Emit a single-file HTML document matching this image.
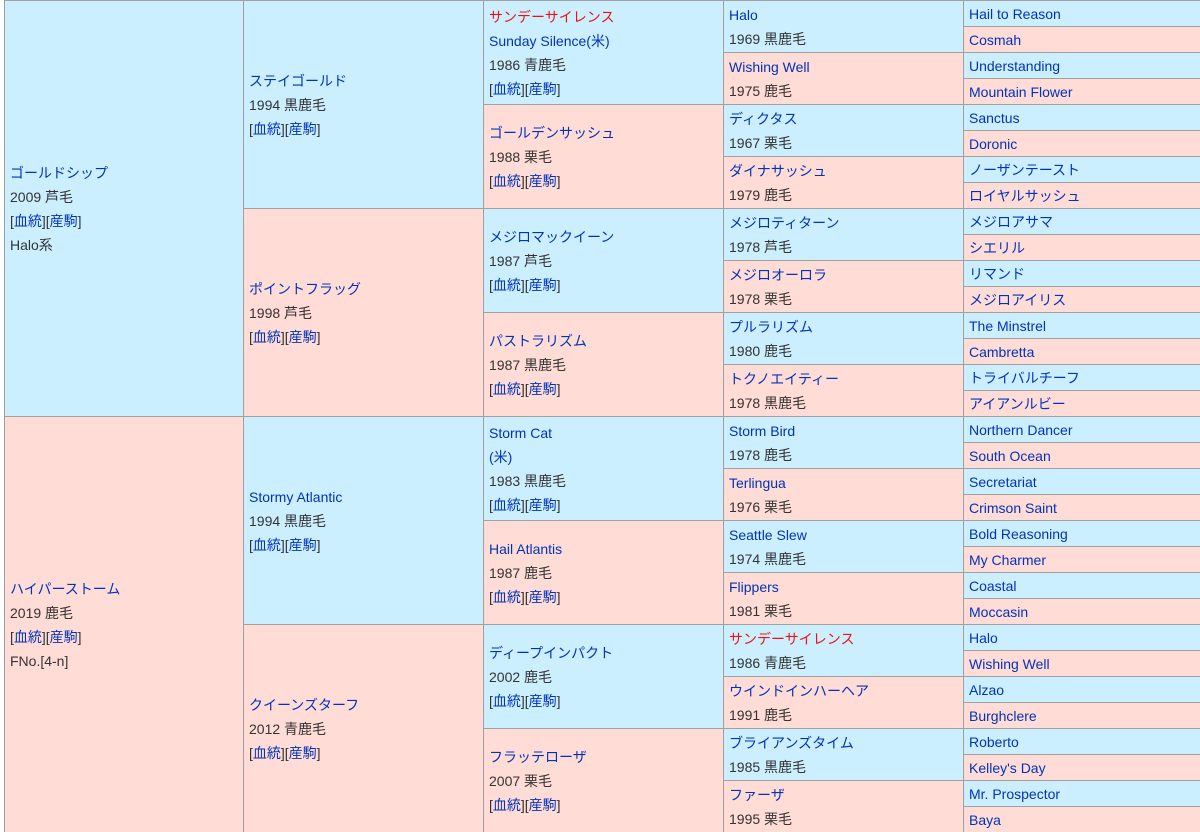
<!DOCTYPE html>
<html><head><meta charset="utf-8"><style>
body{margin:0;width:1200px;height:831px;overflow:hidden;background:#fff;font-family:"Liberation Sans","Noto Sans CJK JP",sans-serif;font-size:14px;color:#333}
.c{position:absolute;box-sizing:border-box;border-left:1px solid #a0a0a0;border-top:1px solid #a0a0a0;display:flex;flex-direction:column;justify-content:center;padding-left:5px;line-height:24px;white-space:nowrap;overflow:hidden}
.b{background:#ccefff}.p{background:#ffdcd6}
a,.l{color:#0033bb;text-decoration:none}
.r{color:#ee1111}
.g1{left:4px;width:240px;height:416px}
.g2{left:243px;width:241px;height:208px}
.g3{left:483px;width:241px;height:104px}
.g4{left:723px;width:241px;height:52px}
.g5{left:963px;width:237px;height:26px}
</style></head><body>
<div class="c g1 b" style="top:0"><span class="l">ゴールドシップ</span><span>2009 芦毛</span><span>[<a>血統</a>][<a>産駒</a>]</span><span>Halo系</span></div>
<div class="c g1 p" style="top:416px"><span class="l">ハイパーストーム</span><span>2019 鹿毛</span><span>[<a>血統</a>][<a>産駒</a>]</span><span>FNo.[4-n]</span></div>

<div class="c g2 b" style="top:0"><span class="l">ステイゴールド</span><span>1994 黒鹿毛</span><span>[<a>血統</a>][<a>産駒</a>]</span></div>
<div class="c g2 p" style="top:208px"><span class="l">ポイントフラッグ</span><span>1998 芦毛</span><span>[<a>血統</a>][<a>産駒</a>]</span></div>
<div class="c g2 b" style="top:416px"><span class="l">Stormy Atlantic</span><span>1994 黒鹿毛</span><span>[<a>血統</a>][<a>産駒</a>]</span></div>
<div class="c g2 p" style="top:624px"><span class="l">クイーンズターフ</span><span>2012 青鹿毛</span><span>[<a>血統</a>][<a>産駒</a>]</span></div>

<div class="c g3 b" style="top:0"><span class="r">サンデーサイレンス</span><span class="l">Sunday Silence(米)</span><span>1986 青鹿毛</span><span>[<a>血統</a>][<a>産駒</a>]</span></div>
<div class="c g3 p" style="top:104px"><span class="l">ゴールデンサッシュ</span><span>1988 栗毛</span><span>[<a>血統</a>][<a>産駒</a>]</span></div>
<div class="c g3 b" style="top:208px"><span class="l">メジロマックイーン</span><span>1987 芦毛</span><span>[<a>血統</a>][<a>産駒</a>]</span></div>
<div class="c g3 p" style="top:312px"><span class="l">パストラリズム</span><span>1987 黒鹿毛</span><span>[<a>血統</a>][<a>産駒</a>]</span></div>
<div class="c g3 b" style="top:416px"><span class="l">Storm Cat</span><span class="l">(米)</span><span>1983 黒鹿毛</span><span>[<a>血統</a>][<a>産駒</a>]</span></div>
<div class="c g3 p" style="top:520px"><span class="l">Hail Atlantis</span><span>1987 鹿毛</span><span>[<a>血統</a>][<a>産駒</a>]</span></div>
<div class="c g3 b" style="top:624px"><span class="l">ディープインパクト</span><span>2002 鹿毛</span><span>[<a>血統</a>][<a>産駒</a>]</span></div>
<div class="c g3 p" style="top:728px"><span class="l">フラッテローザ</span><span>2007 栗毛</span><span>[<a>血統</a>][<a>産駒</a>]</span></div>

<div class="c g4 b" style="top:0"><span class="l">Halo</span><span>1969 黒鹿毛</span></div>
<div class="c g4 p" style="top:52px"><span class="l">Wishing Well</span><span>1975 鹿毛</span></div>
<div class="c g4 b" style="top:104px"><span class="l">ディクタス</span><span>1967 栗毛</span></div>
<div class="c g4 p" style="top:156px"><span class="l">ダイナサッシュ</span><span>1979 鹿毛</span></div>
<div class="c g4 b" style="top:208px"><span class="l">メジロティターン</span><span>1978 芦毛</span></div>
<div class="c g4 p" style="top:260px"><span class="l">メジロオーロラ</span><span>1978 栗毛</span></div>
<div class="c g4 b" style="top:312px"><span class="l">プルラリズム</span><span>1980 鹿毛</span></div>
<div class="c g4 p" style="top:364px"><span class="l">トクノエイティー</span><span>1978 黒鹿毛</span></div>
<div class="c g4 b" style="top:416px"><span class="l">Storm Bird</span><span>1978 鹿毛</span></div>
<div class="c g4 p" style="top:468px"><span class="l">Terlingua</span><span>1976 栗毛</span></div>
<div class="c g4 b" style="top:520px"><span class="l">Seattle Slew</span><span>1974 黒鹿毛</span></div>
<div class="c g4 p" style="top:572px"><span class="l">Flippers</span><span>1981 栗毛</span></div>
<div class="c g4 b" style="top:624px"><span class="r">サンデーサイレンス</span><span>1986 青鹿毛</span></div>
<div class="c g4 p" style="top:676px"><span class="l">ウインドインハーヘア</span><span>1991 鹿毛</span></div>
<div class="c g4 b" style="top:728px"><span class="l">ブライアンズタイム</span><span>1985 黒鹿毛</span></div>
<div class="c g4 p" style="top:780px"><span class="l">ファーザ</span><span>1995 栗毛</span></div>

<div class="c g5 b" style="top:0"><span class="l">Hail to Reason</span></div>
<div class="c g5 p" style="top:26px"><span class="l">Cosmah</span></div>
<div class="c g5 b" style="top:52px"><span class="l">Understanding</span></div>
<div class="c g5 p" style="top:78px"><span class="l">Mountain Flower</span></div>
<div class="c g5 b" style="top:104px"><span class="l">Sanctus</span></div>
<div class="c g5 p" style="top:130px"><span class="l">Doronic</span></div>
<div class="c g5 b" style="top:156px"><span class="l">ノーザンテースト</span></div>
<div class="c g5 p" style="top:182px"><span class="l">ロイヤルサッシュ</span></div>
<div class="c g5 b" style="top:208px"><span class="l">メジロアサマ</span></div>
<div class="c g5 p" style="top:234px"><span class="l">シエリル</span></div>
<div class="c g5 b" style="top:260px"><span class="l">リマンド</span></div>
<div class="c g5 p" style="top:286px"><span class="l">メジロアイリス</span></div>
<div class="c g5 b" style="top:312px"><span class="l">The Minstrel</span></div>
<div class="c g5 p" style="top:338px"><span class="l">Cambretta</span></div>
<div class="c g5 b" style="top:364px"><span class="l">トライバルチーフ</span></div>
<div class="c g5 p" style="top:390px"><span class="l">アイアンルビー</span></div>
<div class="c g5 b" style="top:416px"><span class="l">Northern Dancer</span></div>
<div class="c g5 p" style="top:442px"><span class="l">South Ocean</span></div>
<div class="c g5 b" style="top:468px"><span class="l">Secretariat</span></div>
<div class="c g5 p" style="top:494px"><span class="l">Crimson Saint</span></div>
<div class="c g5 b" style="top:520px"><span class="l">Bold Reasoning</span></div>
<div class="c g5 p" style="top:546px"><span class="l">My Charmer</span></div>
<div class="c g5 b" style="top:572px"><span class="l">Coastal</span></div>
<div class="c g5 p" style="top:598px"><span class="l">Moccasin</span></div>
<div class="c g5 b" style="top:624px"><span class="l">Halo</span></div>
<div class="c g5 p" style="top:650px"><span class="l">Wishing Well</span></div>
<div class="c g5 b" style="top:676px"><span class="l">Alzao</span></div>
<div class="c g5 p" style="top:702px"><span class="l">Burghclere</span></div>
<div class="c g5 b" style="top:728px"><span class="l">Roberto</span></div>
<div class="c g5 p" style="top:754px"><span class="l">Kelley's Day</span></div>
<div class="c g5 b" style="top:780px"><span class="l">Mr. Prospector</span></div>
<div class="c g5 p" style="top:806px"><span class="l">Baya</span></div>
</body></html>
